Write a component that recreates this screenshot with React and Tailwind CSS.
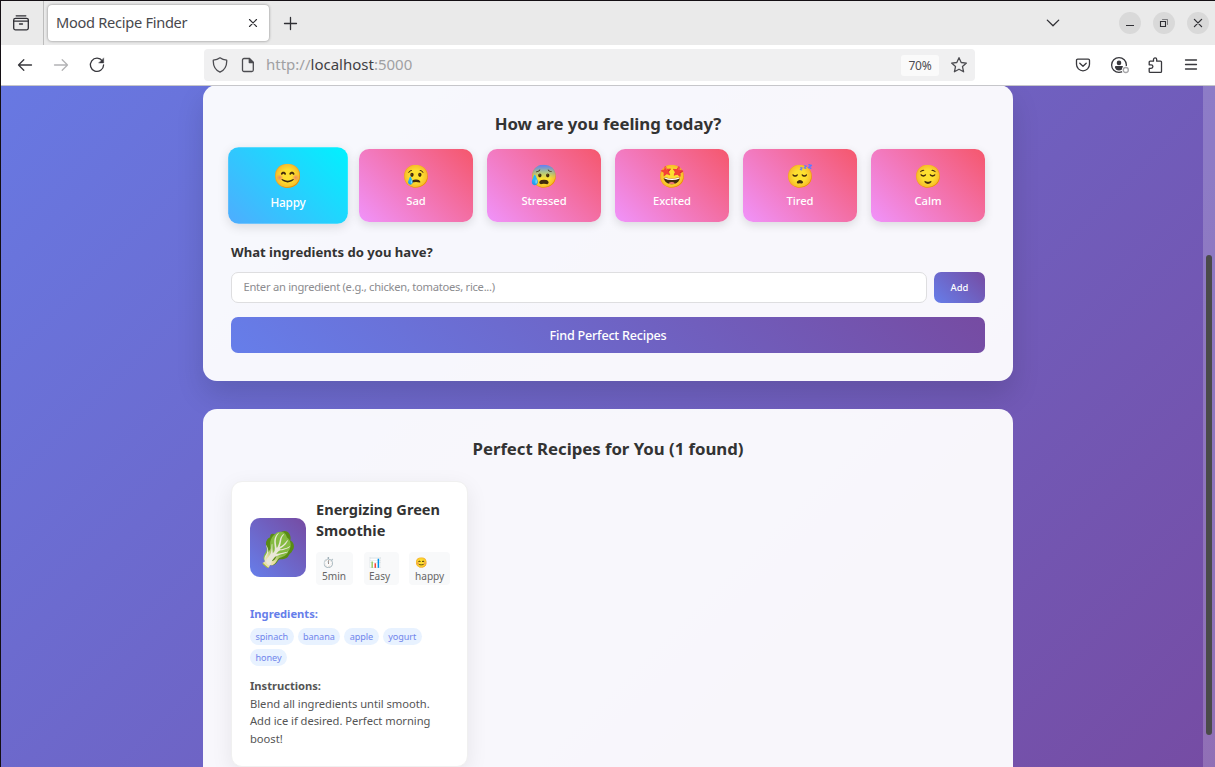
import React from "react";

const moods = [
  { emoji: "😢", label: "Sad" },
  { emoji: "😰", label: "Stressed" },
  { emoji: "🤩", label: "Excited" },
  { emoji: "😴", label: "Tired" },
  { emoji: "😌", label: "Calm" },
];

const stroke = {
  fill: "none",
  stroke: "currentColor",
  strokeWidth: 1.3,
  strokeLinecap: "round",
  strokeLinejoin: "round",
};

function Icon({ children, className = "size-4" }) {
  return (
    <svg viewBox="0 0 16 16" className={"block shrink-0 " + className} {...stroke}>
      {children}
    </svg>
  );
}

function TabStrip() {
  return (
    <div className="flex h-11 shrink-0 items-center bg-[#eaeaea] text-[#2f2f34]">
      <div className="flex h-full w-[43px] items-center justify-center border-r border-[#bdbdbd] pr-[3px]">
        <Icon className="size-4">
          <path d="M3.200.8h9.600" />
          <path d="M2.500 3.300h11a1.800 1.800 0 0 1 1.800 1.800v8a1.800 1.800 0 0 1-1.800 1.800h-11a1.800 1.800 0 0 1-1.800-1.800v-8a1.800 1.800 0 0 1 1.800-1.800z" />
          <path d="M.8 6.200h14.400M6.500 9h3" />
        </Icon>
      </div>
      <div className="ml-[4px] mt-[-1px] flex h-[36px] w-[221px] items-center justify-between rounded-[4px] bg-white pl-2 pr-[9px] shadow-[0_0_3px_rgba(0,0,0,0.45)]">
        <span className="-mt-px whitespace-nowrap text-[14.600px] leading-5 tracking-[-0.280px] text-[#48484d]">Mood Recipe Finder</span>
        <Icon className="size-[14px]">
          <path d="M4 4l8 8M12 4l-8 8" />
        </Icon>
      </div>
      <Icon className="ml-[14px] size-4">
        <path d="M7.500 2.500v12M1.500 8.500h12" />
      </Icon>
      <div className="ml-auto flex items-center pr-[6px]">
        <Icon className="mr-[58px] size-4">
          <path d="M2.300 5.100L8 10.800l5.700-5.700" />
        </Icon>
        <div className="flex gap-[12px]">
          <div className="flex size-[22px] items-center justify-center rounded-full bg-[#d9d9d9]">
            <Icon><path d="M4 10.500h8" strokeLinecap="butt" strokeWidth="1" /></Icon>
          </div>
          <div className="flex size-[22px] items-center justify-center rounded-full bg-[#d9d9d9]">
            <Icon>
              <path d="M4.500 6.500h5v5h-5z" strokeWidth="1.100" strokeLinejoin="miter" />
              <path d="M6.500 4.500h5v5" strokeWidth="0.900" opacity="0.6" strokeLinejoin="miter" />
            </Icon>
          </div>
          <div className="flex size-[22px] items-center justify-center rounded-full bg-[#d9d9d9]">
            <Icon><path d="M4.400 4.400l7.200 7.200M11.600 4.400l-7.200 7.200" /></Icon>
          </div>
        </div>
      </div>
    </div>
  );
}

function Toolbar() {
  return (
    <div className="flex h-[41px] shrink-0 items-center border-b border-[#c6c6ca] bg-white text-[#38383d]">
      <div className="flex w-[203px] shrink-0 items-center gap-5 pl-4">
        <Icon><path d="M14.500 8h-13M6.800 2.700L1.500 8l5.300 5.300" /></Icon>
        <Icon className="size-4 text-[#b3b3b5]"><path d="M1.500 8h13M9.200 2.700L14.500 8l-5.300 5.300" /></Icon>
        <Icon>
          <path d="M13.400 4A6.600 6.600 0 1 0 14.600 8" />
          <path d="M14.700 1.200v4.800H9.900z" fill="currentColor" strokeWidth="0.400" />
        </Icon>
      </div>
      <div className="flex h-8 w-[771px] shrink-0 items-center rounded-[4px] bg-[#f0f0f1] pl-2 pr-2 text-[#4c4c51]">
        <Icon><path d="M8 .8c1.800 1.400 4 2.200 6.700 2.400.3 5.400-1.600 9.600-6.700 12C2.900 12.800 1 8.600 1.300 3.200 4 3 6.200 2.200 8 .8z" /></Icon>
        <Icon className="ml-3 size-4">
          <path d="M4 1.500h5.300l4 4v7.500a1.500 1.500 0 0 1-1.500 1.500H4A1.500 1.500 0 0 1 2.500 13V3A1.500 1.500 0 0 1 4 1.500z" />
          <path d="M9.300 1.500v4h4z" fill="currentColor" />
        </Icon>
        <span className="-mt-[2px] ml-[10px] whitespace-nowrap text-[15px] leading-5 text-[#a0a0a3]">
          http://<span className="text-[#3f3f44]">localhost</span>:5000
        </span>
        <span className="ml-auto flex h-[21px] w-[38px] items-center justify-center rounded-[3px] bg-[#fafafa] pt-px text-[12px] tracking-[-0.200px] text-[#4c4c51]">70%</span>
        <Icon className="ml-3 size-4 overflow-visible">
          <path d="M8 .7l2.200 4.800 5.200.6-3.900 3.500 1.100 5.200L8 12.200l-4.600 2.600 1.100-5.200L.6 6.100l5.200-.6z" />
        </Icon>
      </div>
      <div className="ml-auto flex items-center gap-5 pr-4">
        <Icon>
          <path d="M2.700 2.100h10.600a1.200 1.200 0 0 1 1.200 1.200v4a6.500 6.500 0 0 1-13 0v-4a1.200 1.200 0 0 1 1.200-1.200z" />
          <path d="M4.800 6.200L8 9.300l3.200-3.100" />
        </Icon>
        <Icon className="size-4 overflow-visible">
          <circle cx="8" cy="8" r="7.400" />
          <circle cx="8" cy="5.900" r="2.300" fill="currentColor" stroke="none" />
          <path d="M3.900 10.200c0-.8.6-1.200 1.300-1.200h5.600c.7 0 1.300.4 1.300 1.200-.4 2-2 3.300-4.100 3.300s-3.700-1.300-4.100-3.300z" fill="currentColor" stroke="none" />
          <circle cx="14.800" cy="13" r="4" fill="#fff" stroke="none" />
          <circle cx="14.800" cy="13" r="2.500" stroke="#a5a5a8" />
        </Icon>
        <Icon className="size-4 overflow-visible">
          <path d="M3.100 4.200h3.400V2.500a1.600 1.600 0 0 1 3.200 0v1.700h3.900a.9.9 0 0 1 .9.900v9.300a.9.9 0 0 1-.9.900H3.100a.9.9 0 0 1-.9-.9v-3h1.900a1.800 1.800 0 0 0 0-3.600H2.200V5.100a.9.9 0 0 1 .9-.9z" />
        </Icon>
        <Icon><path d="M2.500 3h11M2.500 7.500h11M2.500 12h11" /></Icon>
      </div>
    </div>
  );
}

function MoodCard({ emoji, label, active }) {
  const look = active
    ? "scale-105 bg-[linear-gradient(45deg,#4facfe,#00f2fe)]"
    : "bg-[linear-gradient(45deg,#f093fb,#f5576c)]";
  return (
    <button className={"flex h-[73px] flex-col items-center rounded-[10px] pt-[11px] text-white shadow-[0_3px_10px_rgba(0,0,0,0.12)] " + look}>
      <span className="text-[22.400px] leading-[31px]">{emoji}</span>
      <span className={"text-[11.200px] font-medium leading-4 " + (active ? "mt-[3px] tracking-[-0.220px]" : "mt-[2px] tracking-[-0.050px]")}>{label}</span>
    </button>
  );
}

function FinderPanel() {
  return (
    <section className="-mt-px h-[296px] shrink-0 rounded-[14px] bg-white/95 px-7 pt-[27px] shadow-[0_14px_28px_rgba(0,0,0,0.13)]">
      <h2 className="text-center text-[16.800px] font-bold leading-[23px] tracking-[-0.030px] text-[#333]">How are you feeling today?</h2>
      <div className="mt-[14px] grid grid-cols-6 gap-[14px]">
        <MoodCard emoji="😊" label="Happy" active />
        {moods.map((m) => (
          <MoodCard key={m.label} {...m} />
        ))}
      </div>
      <h3 className="mt-[21px] text-[13.100px] font-bold leading-[18px] text-[#333]">What ingredients do you have?</h3>
      <div className="mt-[11px] flex gap-[7px]">
        <input
          placeholder="Enter an ingredient (e.g., chicken, tomatoes, rice...)"
          className="h-[31px] flex-1 rounded-[7px] border border-[#dedee0] bg-white pl-[11.500px] pr-[12px] pb-[2px] text-[11.200px] tracking-[-0.270px] placeholder:text-[#8c8c8f]"
        />
        <button className="h-[31px] w-[51px] rounded-[7px] bg-[linear-gradient(45deg,#667eea,#764ba2)] pt-px text-[9.400px] font-medium text-white">Add</button>
      </div>
      <button className="mt-[14px] h-9 w-full rounded-[7px] bg-[linear-gradient(45deg,#667eea,#764ba2)] pt-[2px] text-[12.600px] font-medium tracking-[-0.220px] text-white">
        Find Perfect Recipes
      </button>
    </section>
  );
}

function Meta({ icon, text, className }) {
  return (
    <div className={"h-[33px] rounded-[4px] bg-[#f8f9fa] pt-[3px] text-[10.100px] leading-[14px] text-[#666] " + className}>
      <div>{icon}</div>
      <div>{text}</div>
    </div>
  );
}

function RecipeCard() {
  return (
    <article className="mt-[21px] h-[286px] w-[237px] rounded-[11px] border border-[#f0f0f0] bg-white pl-[18px] pr-[17px] pt-[17px] shadow-[0_6px_21px_rgba(0,0,0,0.08)]">
      <div className="flex items-center">
        <div className="mt-[10px] flex h-[59px] w-14 shrink-0 items-center justify-center rounded-[10px] bg-[linear-gradient(45deg,#667eea,#764ba2)] pt-[4px] text-[33.600px] leading-none">
          🥬
        </div>
        <div className="ml-[10px]">
          <h4 className="whitespace-nowrap text-[14.560px] font-bold leading-[21px] tracking-[0.020px] text-[#333]">
            Energizing Green
            <br />
            Smoothie
          </h4>
          <div className="mt-[11px] flex">
            <Meta icon="⏱️" text="5min" className="w-[37px] pl-[6px]" />
            <Meta icon="📊" text="Easy" className="ml-[11px] w-[35px] pl-[5px]" />
            <Meta icon="😊" text="happy" className="ml-[10px] w-[41px] pl-[6px]" />
          </div>
        </div>
      </div>
      <h5 className="mt-[21px] text-[11.200px] font-bold leading-4 tracking-[-0.020px] text-[#667eea]">Ingredients:</h5>
      <div className="mt-[6px] flex flex-wrap gap-[4px]">
        {["spinach", "banana", "apple", "yogurt", "honey"].map((x) => (
          <span key={x} className="h-[17px] rounded-full bg-[#e8f2ff] px-[5.500px] text-[9.100px] leading-[17px] tracking-[-0.070px] text-[#7186ec]">
            {x}
          </span>
        ))}
      </div>
      <div className="mt-[11px] whitespace-nowrap text-[11.200px] leading-[17.700px] tracking-[-0.030px] text-[#555]">
        <strong>Instructions:</strong>
        <br />
        Blend all ingredients until smooth.
        <br />
        Add ice if desired. Perfect morning
        <br />
        boost!
      </div>
    </article>
  );
}

export default function App() {
  return (
    <div className="flex h-[767px] w-[1215px] flex-col overflow-hidden border-l border-t border-[#140f14] font-['Noto_Sans','Noto_Color_Emoji',sans-serif]">
      <TabStrip />
      <Toolbar />
      <main className="relative flex min-h-0 flex-1 flex-col overflow-hidden bg-[linear-gradient(135deg,#667eea,#764ba2)] bg-[length:100%_966px] bg-[position:0_-240px]">
        <div className="mx-auto flex w-[810px] shrink-0 flex-col gap-7">
          <FinderPanel />
          <section className="h-[400px] shrink-0 rounded-[14px] bg-white/95 px-7 pt-[28px]">
            <h2 className="text-center text-[16.800px] font-bold leading-[23px] tracking-[-0.030px] text-[#333]">Perfect Recipes for You (1 found)</h2>
            <RecipeCard />
          </section>
        </div>
        <div className="absolute inset-y-0 right-0 w-3 bg-white/20">
          <div className="mx-auto mt-[169px] h-[480px] w-[6px] rounded-full bg-[#4a4a4a]" />
        </div>
      </main>
    </div>
  );
}
